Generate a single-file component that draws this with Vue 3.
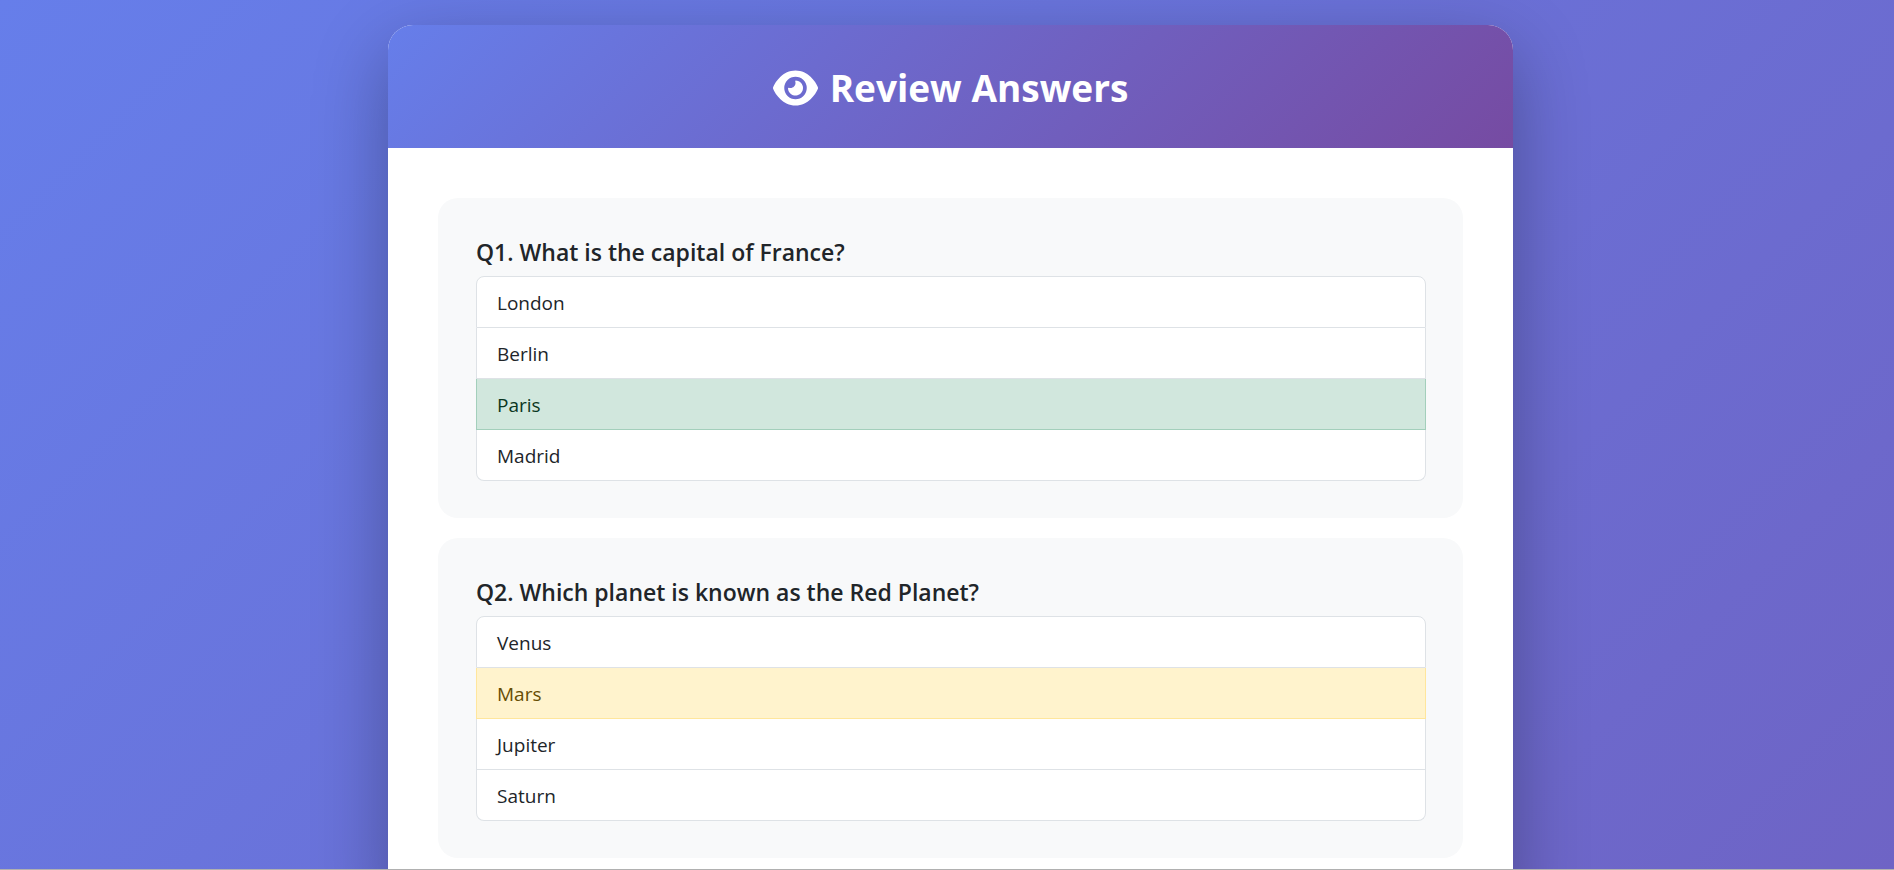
<template>
    <div class="page">
        <main class="quiz-container">
            <header class="quiz-header">
                <h1>
                    <svg class="eye-icon" viewBox="0 0 576 512" aria-hidden="true">
                        <path fill="currentColor" d="M288 32c-80.8 0-145.5 36.8-192.6 80.6C48.6 156 17.3 208 2.5 243.7c-3.3 7.9-3.3 16.7 0 24.6C17.3 304 48.6 356 95.4 399.4C142.5 443.2 207.2 480 288 480s145.5-36.8 192.6-80.6c46.8-43.5 78.1-95.4 93-131.1c3.3-7.9 3.3-16.7 0-24.6c-14.9-35.7-46.2-87.7-93-131.1C433.5 68.8 368.8 32 288 32zM144 256a144 144 0 1 1 288 0 144 144 0 1 1 -288 0zm144-64c0 35.3-28.7 64-64 64c-7.1 0-13.9-1.2-20.3-3.3c-5.5-1.8-11.9 1.6-11.7 7.4c.3 6.9 1.3 13.8 3.2 20.7c13.7 51.2 66.4 81.6 117.6 67.9s81.6-66.4 67.9-117.6c-11.1-41.5-47.8-69.4-88.6-71.1c-5.8-.2-9.2 6.1-7.4 11.7c2.1 6.4 3.3 13.2 3.3 20.3z" />
                    </svg>
                    <span>Review Answers</span>
                </h1>
            </header>
            <div class="quiz-body">
                <section v-for="(question, index) in questions" :key="index" class="question-card">
                    <h2>Q{{ index + 1 }}. {{ question.text }}</h2>
                    <ul class="option-list">
                        <li v-for="option in question.options" :key="option" class="option" :class="optionClass(question, option)">
                            {{ option }}
                        </li>
                    </ul>
                </section>
            </div>
        </main>
    </div>
</template>

<script setup>
const questions = [
    {
        text: 'What is the capital of France?',
        options: ['London', 'Berlin', 'Paris', 'Madrid'],
        highlighted: 'Paris',
        status: 'success'
    },
    {
        text: 'Which planet is known as the Red Planet?',
        options: ['Venus', 'Mars', 'Jupiter', 'Saturn'],
        highlighted: 'Mars',
        status: 'warning'
    }
];

const optionClass = (question, option) => {
    return option === question.highlighted ? 'option-' + question.status : '';
}
</script>

<style>
body {
    margin: 0;
}
</style>

<style scoped>
.page {
    box-sizing: border-box;
    height: 100vh;
    overflow: hidden;
    padding: 25px 25px 25px 32px;
    border-bottom: 1px solid #b0b0b0;
    background: linear-gradient(135deg, #667eea 0%, #764ba2 100%) 0 0 / 100% 3500px no-repeat;
    font-family: "Segoe UI", "Open Sans", "Noto Sans", sans-serif;
    color: #212529;
}

.quiz-container {
    max-width: 1125px;
    margin: 0 auto;
    overflow: hidden;
    border-radius: 25px;
    background: #fff;
    box-shadow: 0 25px 75px rgba(0, 0, 0, 0.3);
}

.quiz-header {
    padding: 39px 38px 36px;
    background: linear-gradient(135deg, #667eea 0%, #764ba2 100%);
    color: #fff;
}

.quiz-header h1 {
    display: flex;
    justify-content: center;
    align-items: center;
    gap: 12px;
    margin: 0;
    font-size: 37px;
    font-weight: 700;
    line-height: 48px;
}

.eye-icon {
    width: 45px;
    height: 40px;
}

.quiz-body {
    display: flex;
    flex-direction: column;
    gap: 20px;
    padding: 50px;
}

.question-card {
    padding: 38px 37px 37px 38px;
    border-radius: 20px;
    background: #f8f9fa;
}

.question-card h2 {
    margin: 0;
    padding: 1px 0 9px;
    font-size: 23px;
    font-weight: 600;
    line-height: 30px;
}

.option-list {
    margin: 0;
    padding: 0;
    list-style: none;
}

.option {
    padding: 11px 20px 9px;
    border: 1px solid #dee2e6;
    border-top: 0;
    background: #fff;
    font-size: 19px;
    line-height: 30px;
}

.option:first-child {
    border-top: 1px solid #dee2e6;
    border-radius: 8px 8px 0 0;
}

.option:last-child {
    border-radius: 0 0 8px 8px;
}

.option-success {
    border-color: #a3cfbb;
    background: #d1e7dd;
    color: #0a3622;
}

.option-warning {
    border-color: #ffe69c;
    background: #fff3cd;
    color: #664d03;
}
</style>
